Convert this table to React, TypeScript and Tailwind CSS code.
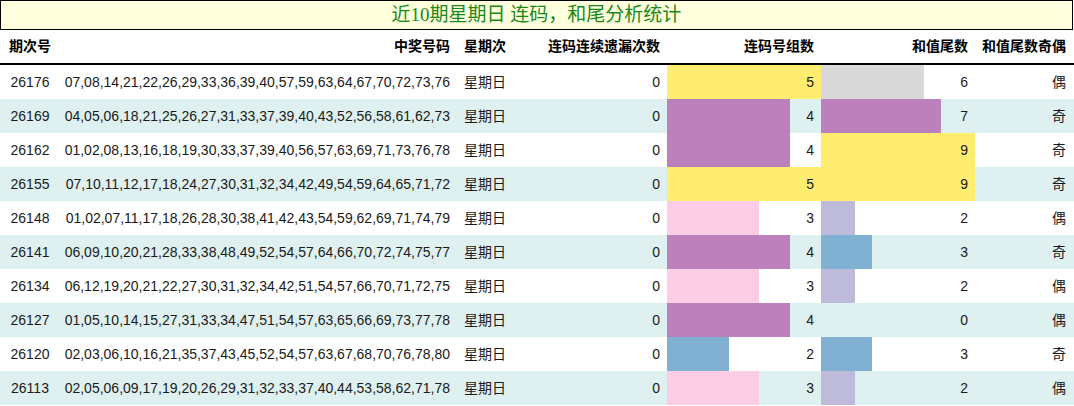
const rows = [
  { id: "26176", nums: "07,08,14,21,22,26,29,33,36,39,40,57,59,63,64,67,70,72,73,76", miss: 0, groups: 5, tail: 6, parity: "偶" },
  { id: "26169", nums: "04,05,06,18,21,25,26,27,31,33,37,39,40,43,52,56,58,61,62,73", miss: 0, groups: 4, tail: 7, parity: "奇" },
  { id: "26162", nums: "01,02,08,13,16,18,19,30,33,37,39,40,56,57,63,69,71,73,76,78", miss: 0, groups: 4, tail: 9, parity: "奇" },
  { id: "26155", nums: "07,10,11,12,17,18,24,27,30,31,32,34,42,49,54,59,64,65,71,72", miss: 0, groups: 5, tail: 9, parity: "奇" },
  { id: "26148", nums: "01,02,07,11,17,18,26,28,30,38,41,42,43,54,59,62,69,71,74,79", miss: 0, groups: 3, tail: 2, parity: "偶" },
  { id: "26141", nums: "06,09,10,20,21,28,33,38,48,49,52,54,57,64,66,70,72,74,75,77", miss: 0, groups: 4, tail: 3, parity: "奇" },
  { id: "26134", nums: "06,12,19,20,21,22,27,30,31,32,34,42,51,54,57,66,70,71,72,75", miss: 0, groups: 3, tail: 2, parity: "偶" },
  { id: "26127", nums: "01,05,10,14,15,27,31,33,34,47,51,54,57,63,65,66,69,73,77,78", miss: 0, groups: 4, tail: 0, parity: "偶" },
  { id: "26120", nums: "02,03,06,10,16,21,35,37,43,45,52,54,57,63,67,68,70,76,78,80", miss: 0, groups: 2, tail: 3, parity: "奇" },
  { id: "26113", nums: "02,05,06,09,17,19,20,26,29,31,32,33,37,40,44,53,58,62,71,78", miss: 0, groups: 3, tail: 2, parity: "偶" },
];

// bar colours per value, one map per column
const groupColor: Record<number, string> = {
  2: "#80b1d3",
  3: "#fccde5",
  4: "#bc80bd",
  5: "#ffed6f",
};
const tailColor: Record<number, string> = {
  2: "#bebada",
  3: "#80b1d3",
  6: "#d9d9d9",
  7: "#bc80bd",
  9: "#ffed6f",
};

const cols = "grid grid-cols-[60px_396px_84px_127px_154px_154px_98px]";

function BarCell({ value, max, color }: { value: number; max: number; color?: string }) {
  return (
    <div className="relative flex items-center justify-end pr-[7px]">
      {value > 0 && color ? (
        <div
          className="absolute inset-y-0 left-0"
          style={{ width: `${(value / max) * 100}%`, backgroundColor: color }}
        />
      ) : null}
      <span className="relative">{value}</span>
    </div>
  );
}

export default function App() {
  return (
    <div className="w-[1074px] h-[406px] bg-white text-[14px] text-[#1a1a1a] font-['Liberation_Sans','Noto_Sans_CJK_SC',sans-serif]">
      <div className="w-[1073px] h-[30px] border border-black bg-[#ffffdd] flex items-center justify-center text-[19px] text-[#1a881a] font-['Liberation_Serif','Noto_Sans_CJK_SC',serif]">
        近10期星期日 连码，和尾分析统计
      </div>
      <div className={`${cols} h-[35px] border-b-2 border-black font-bold text-black items-center`}>
        <div className="text-center">期次号</div>
        <div className="text-right pr-[6px]">中奖号码</div>
        <div className="pl-[8px]">星期次</div>
        <div className="text-right pr-[7px]">连码连续遗漏次数</div>
        <div className="text-right pr-[7px]">连码号组数</div>
        <div className="text-right pr-[7px]">和值尾数</div>
        <div className="text-right pr-[7px]">和值尾数奇偶</div>
      </div>
      {rows.map((r, i) => (
        <div
          key={r.id}
          className={`${cols} h-[34px] ${i % 2 === 1 ? "bg-[#dff0f0]" : "bg-white"}`}
        >
          <div className="flex items-center justify-center">{r.id}</div>
          <div className="flex items-center justify-end pr-[6px]">{r.nums}</div>
          <div className="flex items-center pl-[8px]">星期日</div>
          <div className="flex items-center justify-end pr-[7px]">{r.miss}</div>
          <BarCell value={r.groups} max={5} color={groupColor[r.groups]} />
          <BarCell value={r.tail} max={9} color={tailColor[r.tail]} />
          <div className="flex items-center justify-end pr-[7px]">{r.parity}</div>
        </div>
      ))}
    </div>
  );
}
